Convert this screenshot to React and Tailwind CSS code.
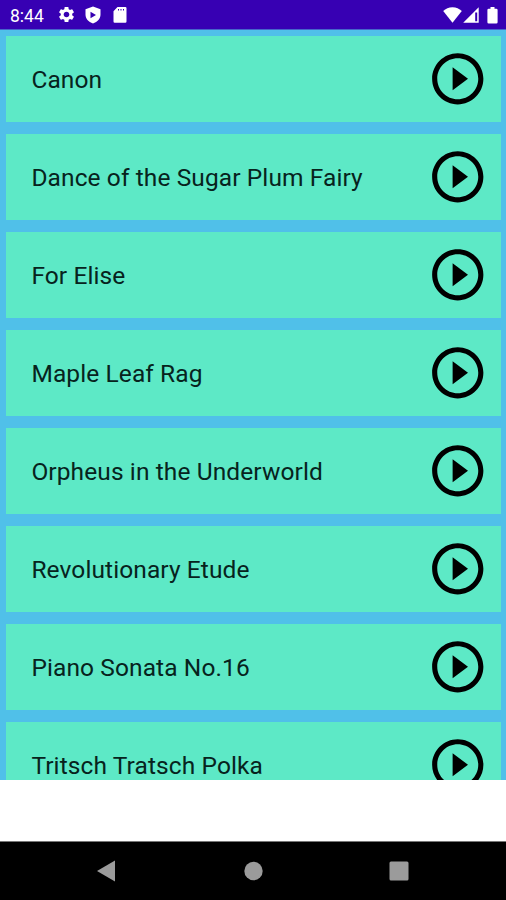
const songs = [
  'Canon',
  'Dance of the Sugar Plum Fairy',
  'For Elise',
  'Maple Leaf Rag',
  'Orpheus in the Underworld',
  'Revolutionary Etude',
  'Piano Sonata No.16',
  'Tritsch Tratsch Polka',
];

function PlayIcon() {
  return (
    <svg viewBox="0 0 24 24" className="size-[61.5px] shrink-0" fill="#000">
      <path d="M10 16.5l6-4.5-6-4.5v9zM12 2C6.48 2 2 6.48 2 12s4.48 10 10 10 10-4.48 10-10S17.52 2 12 2zm0 18c-4.41 0-8-3.59-8-8s3.59-8 8-8 8 3.59 8 8-3.59 8-8 8z" />
    </svg>
  );
}

function StatusBar() {
  return (
    <header className="flex h-[30px] shrink-0 items-center border-b border-[#4666cb] bg-[#3700b3] pl-[10px] pr-2 text-white">
      <span className="w-[47px] pt-[4px] text-[17.5px] leading-none">8:44</span>
      <svg viewBox="0 0 24 24" className="size-[19px]" fill="currentColor">
        <path d="M19.14 12.94c.04-.3.06-.61.06-.94 0-.32-.02-.64-.07-.94l2.03-1.58c.18-.14.23-.41.12-.61l-1.92-3.32c-.12-.22-.37-.29-.59-.22l-2.39.96c-.5-.38-1.03-.7-1.62-.94l-.36-2.54c-.04-.24-.24-.41-.48-.41h-3.84c-.24 0-.43.17-.47.41l-.36 2.54c-.59.24-1.13.57-1.62.94l-2.39-.96c-.22-.08-.47 0-.59.22L2.74 8.87c-.12.21-.08.47.12.61l2.03 1.58c-.05.3-.09.63-.09.94s.02.64.07.94l-2.03 1.58c-.18.14-.23.41-.12.61l1.92 3.32c.12.22.37.29.59.22l2.39-.96c.5.38 1.03.7 1.62.94l.36 2.54c.05.24.24.41.48.41h3.84c.24 0 .44-.17.47-.41l.36-2.54c.59-.24 1.13-.56 1.62-.94l2.39.96c.22.08.47 0 .59-.22l1.92-3.32c.12-.22.07-.47-.12-.61l-2.01-1.58zM12 15.6c-1.98 0-3.6-1.62-3.6-3.6s1.62-3.6 3.6-3.6 3.6 1.62 3.6 3.6-1.62 3.6-3.6 3.6z" />
      </svg>
      <svg viewBox="0 0 16 18" className="ml-[9px] h-[18px] w-4" fill="currentColor">
        <path fillRule="evenodd" d="M8 .5l7.5 2.8v5.2c0 4.2-2.9 7.2-7.5 9-4.6-1.8-7.5-4.8-7.5-9V3.300zM5.500 5.800v6.400L11 9z" />
      </svg>
      <svg viewBox="0 0 14 16" className="ml-[12px] mt-px h-4 w-[14px]" fill="currentColor">
        <path fillRule="evenodd" d="M4.500 0H12.300Q13.500 0 13.500 1.200V14.500Q13.500 15.700 12.300 15.700H1.700Q.5 15.700.5 14.500V4.300zM5 2v1.500h1V2zm2.500 0v1.500h1V2zm2.500 0v1.500h1V2z" />
      </svg>
      <svg viewBox="0 0 19 16" className="ml-auto h-4 w-[19px]" fill="currentColor">
        <path d="M9.500 15.800L.2 4C2.800 1.600 5.700.2 9.500.2s6.700 1.400 9.300 3.800z" />
      </svg>
      <svg viewBox="0 0 16 16" className="ml-px mt-px h-4 w-4" fill="currentColor">
        <path fillRule="evenodd" d="M15.700.3v15.500H.2zM12.200 5.500v8.800h2V5.500z" />
      </svg>
      <svg viewBox="0 0 11 17" className="ml-2 mt-px h-[17px] w-[11px]" fill="currentColor">
        <path d="M3.500 0h4v1.700H9.300Q10.600 1.700 10.600 3v12.300q0 1.300-1.300 1.300H1.700Q.4 16.600.4 15.300V3q0-1.300 1.300-1.300h1.800z" />
      </svg>
    </header>
  );
}

export default function App() {
  return (
    <div className="flex h-[900px] w-[506px] flex-col overflow-hidden bg-white font-[Roboto,sans-serif]">
      <StatusBar />
      <main className="h-[749.5px] shrink-0 overflow-hidden bg-[#50c0e9]">
        <ul className="flex flex-col gap-3 pl-[6.4px] pr-[5px] pt-[6px]">
          {songs.map((song) => (
            <li
              key={song}
              className="flex h-[86px] shrink-0 items-center justify-between bg-[#5de9c6] pl-[25px] pr-[12.5px]"
            >
              <span className="pt-[2px] text-[24.5px] leading-none tracking-[0.1px] text-[#07231d]">{song}</span>
              <PlayIcon />
            </li>
          ))}
        </ul>
      </main>
      <nav className="mt-auto flex h-[59px] shrink-0 items-center border-t border-[#777] bg-black">
        <svg viewBox="0 0 506 58" className="h-[58px] w-[506px]" fill="#9b9b9b">
          <path d="M97 29l18-10.500v21z" />
          <circle cx="253.500" cy="29" r="9.200" />
          <rect x="389.500" y="19.500" width="19" height="19" rx="1.500" />
        </svg>
      </nav>
    </div>
  );
}
